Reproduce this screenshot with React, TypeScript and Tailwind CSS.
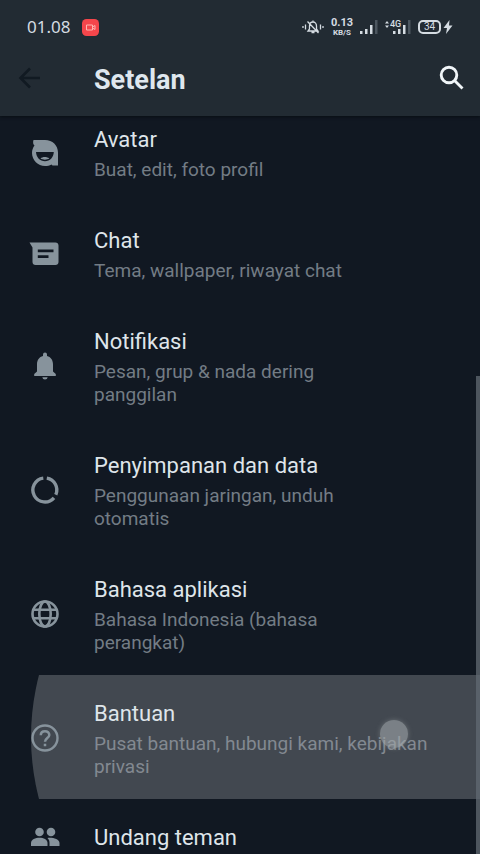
import type { ReactNode } from "react";

type Item = { title: string; lines: string[]; icon: ReactNode; pressed?: boolean };

function Glyph({ children }: { children: ReactNode }) {
  return (
    <svg viewBox="0 0 32 32" className="size-8 shrink-0" fill="none" aria-hidden="true">
      {children}
    </svg>
  );
}

const items: Item[] = [
  {
    title: "Avatar",
    lines: ["Buat, edit, foto profil"],
    icon: (
      <Glyph>
        <path
          fill="currentColor"
          fillRule="evenodd"
          d="M4.5 3H16C23.500 3 29 8.300 29 15.500V28.500H23.500L22.500 27.500C20.500 28.500 18.500 29 16 29C9 29 3 23 3 16C3 13 4 10.500 5.500 8.500C4 7.500 3.800 5 4.500 3ZM7 15C7.300 20.500 11 24.300 16 24.300C21 24.300 24.500 20.500 24.800 15Z"
        />
        <path fill="currentColor" d="M11.500 21.500C13.500 19.500 18 19.500 20.300 21.500C18 23 13.800 23 11.500 21.500Z" />
      </Glyph>
    ),
  },
  {
    title: "Chat",
    lines: ["Tema, wallpaper, riwayat chat"],
    icon: (
      <Glyph>
        <path
          fill="currentColor"
          fillRule="evenodd"
          d="M.500 4.500H26.500C28.200 4.500 29.500 5.800 29.500 7.500V24C29.500 25.700 28.200 27 26.500 27H6.500C4.800 27 3.500 25.700 3.500 24V9.500ZM8.800 11.500V14.200H24.500V11.500ZM8.800 17.300V20H19.500V17.300Z"
        />
      </Glyph>
    ),
  },
  {
    title: "Notifikasi",
    lines: ["Pesan, grup & nada dering", "panggilan"],
    icon: (
      <Glyph>
        <path
          fill="currentColor"
          d="M16 29.500a2.700 2.700 0 0 0 2.700-2.300h-5.400A2.700 2.700 0 0 0 16 29.500ZM24 21.500v-7c0-4.300-2.200-7.500-6-8.400V4.500a2 2 0 0 0-4 0v1.600c-3.800.900-6 4.100-6 8.400v7l-2.800 2.500V26h21.600v-2Z"
        />
      </Glyph>
    ),
  },
  {
    title: "Penyimpanan dan data",
    lines: ["Penggunaan jaringan, unduh", "otomatis"],
    icon: (
      <Glyph>
        <path
          stroke="currentColor"
          strokeWidth="3.400"
          d="M14.300 4.100A12 12 0 1 0 25 23.800M17.800 4.100A12 12 0 0 1 26.800 20.800"
        />
      </Glyph>
    ),
  },
  {
    title: "Bahasa aplikasi",
    lines: ["Bahasa Indonesia (bahasa", "perangkat)"],
    icon: (
      <Glyph>
        <g stroke="currentColor" strokeWidth="2.600">
          <circle cx="16" cy="16" r="12.500" />
          <ellipse cx="16" cy="16" rx="5.700" ry="12.500" />
          <path d="M4.500 11.700H27.500M4.500 20.300H27.500" />
        </g>
      </Glyph>
    ),
  },
  {
    title: "Bantuan",
    lines: ["Pusat bantuan, hubungi kami, kebijakan", "privasi"],
    pressed: true,
    icon: (
      <Glyph>
        <circle cx="16" cy="16" r="12.500" stroke="currentColor" strokeWidth="2.400" />
        <path
          stroke="currentColor"
          strokeWidth="2.500"
          d="M11.800 13.300C11.800 10.700 13.500 9.200 16 9.200C18.500 9.200 20.300 10.800 20.300 13C20.300 16 16 16.200 16 19.800M16 21.700V24.200"
        />
      </Glyph>
    ),
  },
  {
    title: "Undang teman",
    lines: [],
    icon: (
      <Glyph>
        <g fill="currentColor">
          <circle cx="10.500" cy="10" r="4.300" />
          <circle cx="22" cy="10" r="4.300" />
          <path d="M2 24V21C2 17.500 6.500 15.800 10.500 15.800S18.500 17.500 18.500 21V24Z" />
          <path d="M20.500 24V21C20.500 19 20 17.500 18.500 16C23 15.200 30.500 17 30.500 21V24Z" />
        </g>
      </Glyph>
    ),
  },
];

function StatusBar() {
  return (
    <div className="flex h-[54px] items-center justify-between pr-[27px] pl-[27px] text-[#d5dce2]">
      <div className="flex items-center gap-3">
        <span className="text-[17px] leading-5 font-['Noto_Sans',sans-serif]">01.08</span>
        <svg viewBox="0 0 17 17" className="size-[17px]" fill="none" aria-hidden="true">
          <rect width="17" height="17" rx="4.500" fill="#f5464b" />
          <path d="M4.500 6H10.500V11H4.500ZM10.500 8L13 6.500V10.500L10.500 9" stroke="#ffb5b0" />
        </svg>
      </div>
      <div className="flex items-center gap-[7px]">
        <svg viewBox="0 0 22 16" className="h-4 w-[22px]" fill="none" stroke="currentColor" strokeWidth="1.300" aria-hidden="true">
          <path d="M6 12H16L14.500 10V7C14.500 4.500 13 3 11 3S7.500 4.500 7.500 7V10ZM9.500 13.500H12.500M11 1.500V3M5.500 2.500L16.500 14M3.500 5.500V10.500M1 7V9M18.500 5.500V10.500M21 7V9" />
        </svg>
        <div className="flex flex-col items-center font-bold">
          <span className="text-[11px] leading-[11px]">0.13</span>
          <span className="text-[8px] leading-[10px]">KB/S</span>
        </div>
        <svg viewBox="0 0 18 16" className="h-4 w-[18px]" aria-hidden="true">
          <path fill="currentColor" d="M0 12H2.500V15H0ZM5 10H7.500V15H5ZM10 6H12.500V15H10Z" />
          <path fill="#4c565f" d="M15 1H17.500V15H15Z" />
        </svg>
        <svg viewBox="0 0 26 16" className="h-4 w-[26px]" aria-hidden="true">
          <path fill="currentColor" d="M0 4.500L2 2L4 4.500ZM0 6.500L2 9L4 6.500ZM8 12H10.500V15H8ZM13 10H15.500V15H13ZM18 6H20.500V15H18Z" />
          <path fill="#4c565f" d="M23 1H25.500V15H23Z" />
          <text x="5" y="8" fill="currentColor" className="text-[9px] font-medium">4G</text>
        </svg>
        <div className="flex items-center gap-0.5">
          <span className="flex h-[14px] w-[23px] items-center justify-center rounded-[5px] border-2 border-current text-[10px] leading-none">
            34
          </span>
          <svg viewBox="0 0 10 16" className="h-4 w-[10px]" fill="currentColor" aria-hidden="true">
            <path d="M6.500 1L.500 9H4L3 15L9.500 6.500H6Z" />
          </svg>
        </div>
      </div>
    </div>
  );
}

function Row({ title, lines, icon, pressed }: Item) {
  return (
    <li>
      <button
        type="button"
        className="relative flex w-full items-center gap-[33px] overflow-hidden pt-[23px] pb-[21px] pl-[29px] text-left text-[#87939c]"
      >
        {pressed && (
          <span className="absolute top-1/2 left-[31px] size-[488px] -translate-y-1/2 rounded-full bg-[#424850]" />
        )}
        <span className="relative -my-1">{icon}</span>
        <span className="relative flex flex-col gap-0.5">
          <span className="text-[22px] leading-8 text-[#dfe5ea]">{title}</span>
          {lines.length > 0 && (
            <span className={pressed ? "text-[19px] leading-[23px] text-[#828991]" : "text-[19px] leading-[23px] text-[#737c85]"}>
              {lines.map((line) => (
                <span key={line} className="block whitespace-nowrap">
                  {line}
                </span>
              ))}
            </span>
          )}
        </span>
        {pressed && (
          <span className="absolute top-[45px] right-[72px] size-7 rounded-full bg-[#a0a7aa]/60 shadow-[0_0_5px_#a0a7aa66]" />
        )}
      </button>
    </li>
  );
}

export default function App() {
  return (
    <div className="relative h-screen overflow-hidden bg-[#111822] font-[Roboto,sans-serif]">
      <header className="relative z-10 bg-[#222b33] shadow-[0_1px_3px_#080e14]">
        <StatusBar />
        <div className="flex h-[62px] items-start pr-3 pl-[15px]">
          <button type="button" aria-label="Kembali" className="mt-2 text-[#111a22]">
            <svg viewBox="0 0 32 32" className="size-8" fill="none" stroke="currentColor" strokeWidth="2.600" aria-hidden="true">
              <path d="M25 16H6M15 6.500L5.500 16L15 25.500" />
            </svg>
          </button>
          <h1 className="ml-[47px] flex-1 pt-2 text-[27px] leading-9 font-bold text-[#dfe7ee]">Setelan</h1>
          <button type="button" aria-label="Cari" className="mt-2 text-[#f0f5f8]">
            <svg viewBox="0 0 32 32" className="size-8" fill="none" stroke="currentColor" strokeWidth="2.900" aria-hidden="true">
              <circle cx="13" cy="13" r="7.800" />
              <path d="M18.500 18.500L26.500 26.500" />
            </svg>
          </button>
        </div>
      </header>
      <main className="-mt-[15px]">
        <ul>
          {items.map((item) => (
            <Row key={item.title} {...item} />
          ))}
        </ul>
      </main>
      <div className="absolute top-[376px] right-0 bottom-0 w-1 bg-[#626973]/75" />
    </div>
  );
}
